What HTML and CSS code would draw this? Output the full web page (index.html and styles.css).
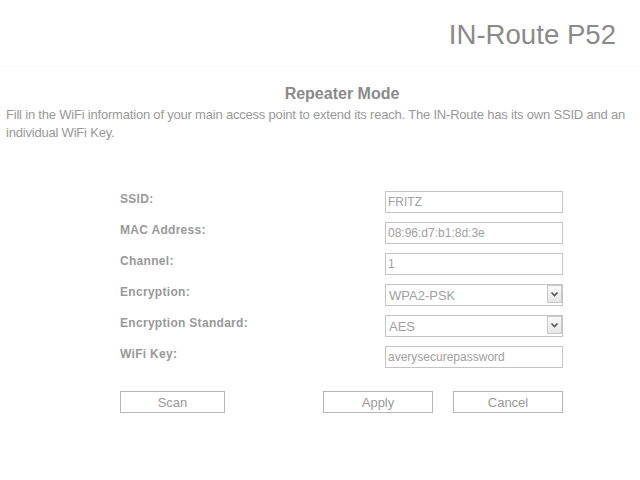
FILE: index.html
```html
<!DOCTYPE html>
<html>
<head>
<meta charset="utf-8">
<link rel="stylesheet" href="styles.css">
</head>
<body>
<header class="top">
  <h1 class="brand">IN-Route P52</h1>
</header>
<main class="content">
  <h2 class="title">Repeater Mode</h2>
  <p class="intro">Fill in the WiFi information of your main access point to extend its reach. The IN-Route has its own SSID and an individual WiFi Key.</p>
  <form class="form">
    <div class="grid">
      <label class="lbl">SSID:</label>
      <input class="field" type="text" value="FRITZ">
      <label class="lbl">MAC Address:</label>
      <input class="field" type="text" value="08:96:d7:b1:8d:3e">
      <label class="lbl">Channel:</label>
      <input class="field" type="text" value="1">
      <label class="lbl">Encryption:</label>
      <div class="sel">
        <select class="field selfield"><option>WPA2-PSK</option></select>
        <span class="arrow"><svg width="9" height="6" viewBox="0 0 9 6"><path d="M1.5 1.5 L4.5 4.5 L7.5 1.5" fill="none" stroke="#555" stroke-width="1.6"/></svg></span>
      </div>
      <label class="lbl">Encryption Standard:</label>
      <div class="sel">
        <select class="field selfield"><option>AES</option></select>
        <span class="arrow"><svg width="9" height="6" viewBox="0 0 9 6"><path d="M1.5 1.5 L4.5 4.5 L7.5 1.5" fill="none" stroke="#555" stroke-width="1.6"/></svg></span>
      </div>
      <label class="lbl">WiFi Key:</label>
      <input class="field" type="text" value="averysecurepassword">
    </div>
    <div class="buttons">
      <button type="button" class="btn scan">Scan</button>
      <div class="right">
        <button type="button" class="btn">Apply</button>
        <button type="button" class="btn">Cancel</button>
      </div>
    </div>
  </form>
</main>
</body>
</html>
```
FILE: styles.css
```css
html, body {
  margin: 0;
  padding: 0;
  background: #fff;
  font-family: "Liberation Sans", Arial, sans-serif;
  color: #999;
}
.top {
  height: 66px;
  border-bottom: 1px solid #f8f8f8;
  display: flex;
  justify-content: flex-end;
  align-items: flex-start;
}
.brand {
  margin: 19px 24px 0 0;
  font-size: 27.6px;
  font-weight: normal;
  color: #8a8a8a;
  line-height: 32px;
}
.content {
  padding: 0 6px;
}
.title {
  margin: 17px 0 0 0;
  padding-left: 44px;
  text-align: center;
  font-size: 16px;
  line-height: 20px;
  font-weight: bold;
  color: #8a8a8a;
}
.intro {
  margin: 2px 0 0 0;
  font-size: 13px;
  line-height: 18px;
  letter-spacing: -0.2px;
  color: #999;
}
.form {
  margin: 49px 0 0 114px;
  width: 443px;
}
.grid {
  display: grid;
  grid-template-columns: 265px 178px;
  grid-auto-rows: 22px;
  row-gap: 9px;
  align-items: center;
}
.lbl {
  font-size: 12px;
  font-weight: bold;
  color: #999;
  letter-spacing: 0.3px;
  margin-top: -6px;
}
.field {
  box-sizing: border-box;
  width: 178px;
  height: 22px;
  margin: 0;
  padding: 0 2px;
  border: 1px solid #c4c4c4;
  background: #fff;
  font-family: "Liberation Sans", Arial, sans-serif;
  font-size: 12px;
  color: #a0a0a0;
  outline: none;
}
.sel {
  position: relative;
  width: 178px;
  height: 22px;
}
.selfield {
  appearance: none;
  -webkit-appearance: none;
  padding: 0 3px;
  font-size: 13px;
  border-radius: 0;
}
.arrow {
  position: absolute;
  right: 1px;
  top: 1px;
  width: 15px;
  height: 18px;
  box-sizing: border-box;
  border: 1px solid #c9c9c9;
  background: linear-gradient(#fafafa, #e6e6e6);
  display: flex;
  align-items: center;
  justify-content: center;
}
.buttons {
  margin-top: 23px;
  display: flex;
  justify-content: space-between;
}
.right {
  display: flex;
  gap: 20px;
}
.btn {
  box-sizing: border-box;
  width: 110px;
  height: 22px;
  margin: 0;
  padding: 0;
  border: 1px solid #b5b5b5;
  background: #fff;
  font-family: "Liberation Sans", Arial, sans-serif;
  font-size: 13px;
  color: #999;
}
.btn.scan {
  width: 105px;
}
```
